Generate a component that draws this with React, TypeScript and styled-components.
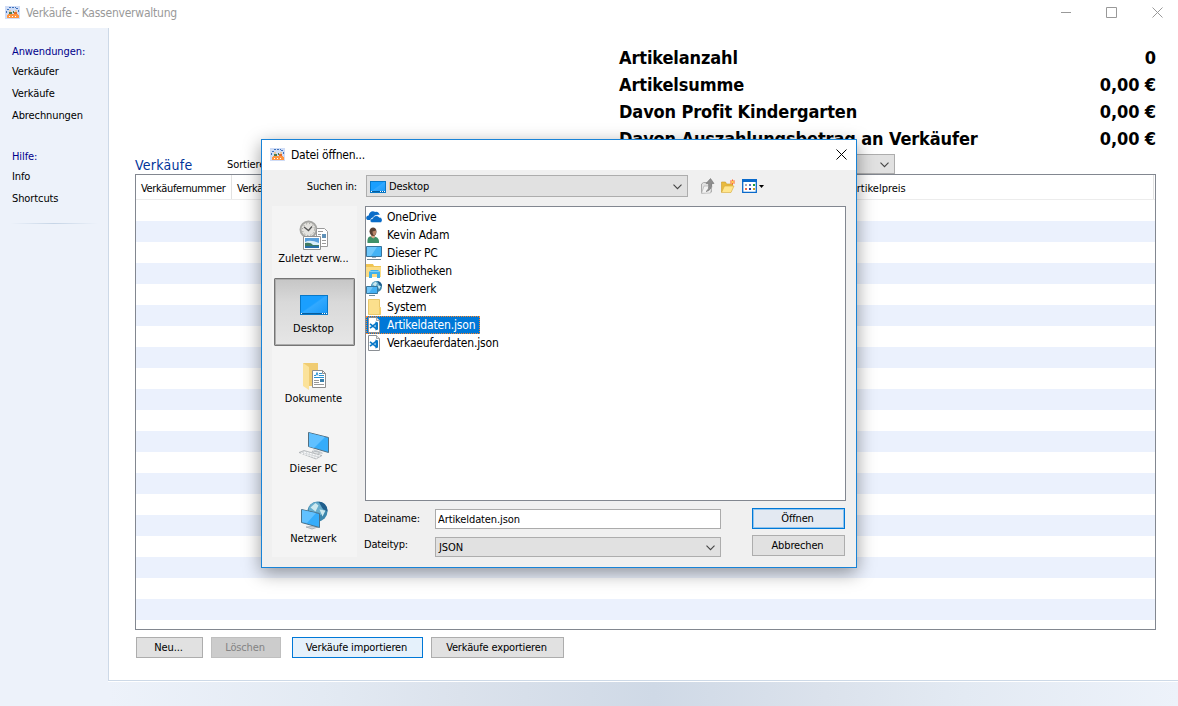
import React, { useId } from "react";
import styled, { createGlobalStyle, css } from "styled-components";

const GlobalStyle = createGlobalStyle`
  * { box-sizing: border-box; }
  body { margin: 0; background: #fff; }
  svg { display: block; flex: none; }
`;

const Window = styled.div`
  position: relative;
  display: flex;
  flex-direction: column;
  width: 1178px;
  height: 706px;
  overflow: hidden;
  background: #fff;
  color: #000;
  font: 11px/14px "DejaVu Sans Condensed", "DejaVu Sans", sans-serif;
  letter-spacing: -0.1px;
  white-space: nowrap;
`;

const TitleBar = styled.header`
  display: flex;
  align-items: center;
  height: 28px;
  padding: 0 15px 3px 5px;
  font-size: 12px;
  letter-spacing: -0.23px;
  color: #999;
`;

const TitleText = styled.span`
  flex: 1;
  margin-left: 6px;
`;

const WindowControls = styled.div`
  display: flex;
  align-items: center;
  gap: 35px;
`;

const Body = styled.div`
  display: flex;
  flex: 1;
`;

const Sidebar = styled.nav`
  width: 108px;
  padding: 17px 0 0 12px;
  background: #edf2fa;
`;

const SidebarTitle = styled.h2`
  margin: 0;
  font: inherit;
  color: #00008b;
  line-height: 14px;
`;

const SidebarList = styled.ul`
  margin: 0 0 25px;
  padding: 0;
  list-style: none;
`;

const SidebarItem = styled.li`
  height: 22px;
  padding-top: 6px;
`;

const SidebarRule = styled.div`
  height: 1px;
  width: 88px;
  margin: -10px 0 0 -2px;
  background: linear-gradient(90deg, transparent, #c6d5e6 50%, transparent);
`;

const Workspace = styled.div`
  display: flex;
  flex-direction: column;
  flex: 1;
`;

const Content = styled.main`
  flex: 1;
  padding: 16px 22px 0 26px;
  border: solid #cdd9e7;
  border-width: 0 0 1px 1px;
`;

const StatusBar = styled.footer`
  height: 25px;
  border-top: 1px solid #fff;
  background: linear-gradient(90deg, #edf2fa, #e3eaf3 20%, #dbe2ec 33%, #cfd9e6 51%, #dbe2ec 67%, #e3eaf3 80%, #edf2fa);
`;

const Totals = styled.dl`
  margin: 0 0 0 484px;
  font-size: 18px;
  font-weight: bold;
  line-height: 27px;
  letter-spacing: -0.12px;
`;

const TotalRow = styled.div`
  display: flex;
  justify-content: space-between;
  dd, dt { margin: 0; }
`;

const TableBar = styled.div`
  display: flex;
  align-items: center;
  height: 22px;
  padding-top: 2px;
`;

const TableTitle = styled.h1`
  width: 92px;
  margin: 2px 0 0;
  font-size: 14px;
  font-weight: normal;
  letter-spacing: 0.25px;
  color: #003399;
`;

const SortLabel = styled.label`
  width: 90px;
  padding-top: 2px;
`;

const ComboBox = styled.div<{ $width: number; $height: number }>`
  display: flex;
  align-items: center;
  width: ${(p) => p.$width}px;
  height: ${(p) => p.$height}px;
  padding: 1px 5px 0 3px;
  border: 1px solid #adadad;
  background: #e1e1e1;
`;

const ComboValue = styled.span`
  flex: 1;
  display: flex;
  align-items: center;
  gap: 3px;
`;

const Table = styled.section`
  height: 456px;
  border: 1px solid #828790;
  overflow: hidden;
`;

const TableHeader = styled.div`
  display: flex;
  height: 25px;
  border-bottom: 1px solid #ececec;
`;

const Column = styled.div<{ $width: number }>`
  width: ${(p) => p.$width}px;
  padding: 7px 0 0 5px;
  border-right: 1px solid #e2e2e2;
  letter-spacing: -0.33px;
  &:last-child { letter-spacing: 0; }
`;

const TableRow = styled.div`
  height: 21px;
  &:nth-child(odd) { background: #ebf1fd; }
`;

const Actions = styled.div`
  display: flex;
  gap: 8px;
  margin: 7px 0 0 1px;
`;

const Button = styled.button<{ $width: number; $tone?: "hot" | "default" | "off"; $push?: number }>`
  width: ${(p) => p.$width}px;
  height: 21px;
  margin: 0 0 0 ${(p) => p.$push ?? 0}px;
  padding: 1px 2px 0 0;
  border: 1px solid #adadad;
  background: #e1e1e1;
  color: #000;
  font: inherit;
  letter-spacing: -0.15px;
  ${(p) => p.$tone === "hot" && css`border-color: #0078d7; background: #e5f1fb;`}
  ${(p) => p.$tone === "default" && css`border-color: #0078d7; background: #e3e9f2; box-shadow: inset 0 0 0 1px #8fc4ee;`}
  ${(p) => p.$tone === "off" && css`border-color: #bfbfbf; background: #ccc; color: #838383;`}
`;

const DialogWindow = styled.div`
  position: absolute;
  left: 261px;
  top: 139px;
  width: 596px;
  height: 429px;
  border: 1px solid #1883d7;
  background: #f0f0f0;
  box-shadow: 0 5px 17px rgba(0, 0, 0, 0.4);
`;

const DialogTitle = styled.div`
  display: flex;
  align-items: center;
  height: 30px;
  padding: 0 9px 1px 8px;
  background: #fff;
  font-size: 12px;
  letter-spacing: -0.2px;
`;

const LookupRow = styled.div`
  display: flex;
  align-items: center;
  height: 22px;
  margin: 5px 0 9px;
`;

const LookupLabel = styled.span`
  width: 104px;
  padding: 2px 9px 0 0;
  text-align: right;
  letter-spacing: -0.2px;
`;

const Toolbar = styled.div`
  display: flex;
  align-items: center;
  gap: 5px;
  margin-left: 12px;
`;

const DialogBody = styled.div`
  display: flex;
  gap: 8px;
  padding-left: 10px;
`;

const Places = styled.div`
  display: flex;
  flex-direction: column;
  align-items: center;
  gap: 2px;
  width: 85px;
  height: 351px;
  padding-top: 2px;
  background: #f4f4f4;
`;

const Place = styled.div<{ $active?: boolean }>`
  display: flex;
  flex-direction: column;
  align-items: center;
  gap: 1px;
  width: 81px;
  height: 68px;
  padding: 10px 2px 0 0;
  border: 1px solid transparent;
  border-radius: 1px;
  letter-spacing: 0;
  ${(p) => p.$active && css`
    border-color: #757575;
    background: linear-gradient(#c6c6c6, #d9d9d9 35%, #e6e6e6);
    box-shadow: inset 0 0 0 1px #acacac;
  `}
`;

const FilePane = styled.div`
  width: 481px;
`;

const FileList = styled.ul`
  height: 295px;
  margin: 0 0 7px;
  padding: 1px 0 0;
  border: 1px solid #828790;
  background: #fff;
  list-style: none;
`;

const FileItem = styled.li<{ $selected?: boolean }>`
  display: flex;
  align-items: center;
  width: max-content;
  height: 18px;
  padding: 0 4px 0 0;
  border: 1px solid transparent;
  font-size: 12px;
  letter-spacing: -0.17px;
  svg { margin: 0 5px 0 -1px; }
  ${(p) => p.$selected && css`
    border: 1px dotted #ff8728;
    background: #0078d7;
    color: #fff;
  `}
`;

const FileForm = styled.div`
  display: flex;
`;

const Fields = styled.div`
  display: grid;
  grid-template-columns: 70px 286px;
  grid-template-rows: 20px 20px;
  row-gap: 8px;
  padding-top: 1px;
`;

const FieldLabel = styled.label`
  margin: 3px 0 0 -1px;
  letter-spacing: -0.2px;
  &:last-of-type { margin-top: 1px; }
`;

const TextField = styled.input`
  width: 286px;
  height: 20px;
  padding: 0 2px;
  border: 1px solid #ababab;
  background: #fff;
  font: inherit;
  letter-spacing: -0.1px;
  outline: none;
`;

const DialogButtons = styled.div`
  display: flex;
  flex-direction: column;
  gap: 6px;
  margin-left: 31px;
`;

const AppIcon = () => (
  <svg width="15" height="13" viewBox="0 0 15 13">
    <path fill="#cfdcf6" d="M0 0h15v13H0z" />
    <path stroke="#3f73bd" strokeDasharray="2 1" fill="none" d="M1.500 7V4.500M2 3.500h2M4 1.500h7M11 2.500h2M13.500 4v3" />
    <path fill="#e9c9a0" d="M4 4h2v2H4zM10 4h2v3h-2z" />
    <path fill="#4e7b50" d="M4 6h3v2H4zM8 5h1v2H8z" />
    <path fill="#e36b2a" d="M9 6h3v2H9z" />
    <path fill="#ff9440" d="M3 8h10v1H3zM2 9h12v3H2z" />
    <path stroke="#fff" strokeDasharray="1 2" d="M4 10.500h9" />
  </svg>
);

const Chevron = () => (
  <svg width="9" height="6" viewBox="0 0 9 6">
    <path d="M.5.7l4 4 4-4" fill="none" stroke="#444" strokeWidth="1.100" />
  </svg>
);

const CloseIcon = ({ color }: { color: string }) => (
  <svg width="11" height="11" viewBox="0 0 11 11">
    <path d="M.5.5l10 10M10.500.5l-10 10" stroke={color} fill="none" />
  </svg>
);

const DesktopIcon = ({ width, height }: { width: number; height: number }) => {
  const id = useId();
  return (
    <svg width={width} height={height} viewBox={`0 0 ${width} ${height}`}>
      <defs>
        <linearGradient id={id} x2="1" y2="1">
          <stop offset=".45" stopColor="#1a9fff" />
          <stop offset=".5" stopColor="#32a9ff" />
          <stop offset="1" stopColor="#1697f8" />
        </linearGradient>
      </defs>
      <rect x=".5" y=".5" width={width - 1} height={height - 1} fill={`url(#${id})`} stroke="#0878c8" />
      <path d={`M1 ${height - 1.500}h${width - 2}`} stroke="#075d9c" />
      <path d={`M1 ${height - 1.500}h1M${width - 6} ${height - 1.500}h1m1 0h1m1 0h1`} stroke="#fff" />
    </svg>
  );
};

const Icon16 = ({ children }: { children: React.ReactNode }) => (
  <svg width="16" height="16" viewBox="0 0 16 16">{children}</svg>
);

const OneDriveIcon = () => (
  <Icon16>
    <path fill="#0a6cc8" d="M1.500 11C-.8 10 .2 6.500 2.700 6.500 3 3 6.500 1 9.200 3c2-.8 4.100.6 4.400 3-3-.6-5.500.4-6.200 2.500-2.200.1-3 1.500-2.600 2.500z" />
    <path fill="#0a6cc8" stroke="#fff" strokeWidth=".5" d="M6 13.600c-2.600-.3-2.300-3.700.6-4C7.600 6.200 11.800 5.700 13.100 8.300c3.200-.2 4.200 4.300 1.400 5.300z" />
  </Icon16>
);

const UserIcon = () => (
  <Icon16>
    <path fill="#3f9168" d="M1.500 16c-.3-4.500.7-6.400 3.500-6.700l2 1.500 2.500-1C12.600 11 13.300 13 13 16z" />
    <path fill="#d4a488" d="M5 7h4v3l-1.500 1.500L5 10z" />
    <path fill="#5a4034" d="M3.500 4.500C3.500-.8 10.500-1 10.500 4.500c0 2-1 4.500-3 4.500s-4-2-4-4.500z" />
    <path fill="#b98469" d="M6.500 4.500l3.500-1v2.300C9.800 7.500 9 8.500 8 8.500S6.500 6 6.500 4.500z" />
  </Icon16>
);

const PcIcon = () => (
  <Icon16>
    <path fill="#43b3f5" stroke="#38749c" d="M.5 1.500h15v10H.5z" />
    <path fill="#70c8fb" d="M1 2h10L5 11H1z" />
    <path stroke="#9ab0bf" d="M6 12.500h4" />
    <path stroke="#6e8797" d="M1 14.500h14" />
  </Icon16>
);

const LibraryIcon = () => (
  <Icon16>
    <path fill="#f0c553" d="M0 1h7l1 2h7v3H0z" />
    <path fill="#fbdc84" d="M0 4h15v10H0z" />
    <path fill="#3fb0eb" d="M3 15V9l2-2h7l2 2v6h-3v-4H6v4z" />
    <path fill="#80d0f6" d="M4 8h9v1H4z" />
  </Icon16>
);

const Globe = ({ cx, cy, r }: { cx: number; cy: number; r: number }) => (
  <g>
    <circle cx={cx} cy={cy} r={r} fill="#3c87ad" />
    <circle cx={cx - r * 0.15} cy={cy - r * 0.2} r={r * 0.72} fill="#69aecd" />
    <path fill="#cde9ef" d={`M${cx - r * 0.7} ${cy - r * 0.4}l${r * 0.5}-${r * 0.45} ${r * 0.3} ${r * 0.25}-${r * 0.3} ${r * 0.6}zM${cx + r * 0.2} ${cy - r * 0.2}l${r * 0.6} ${r * 0.1}-${r * 0.3} ${r * 0.6}z`} />
    <path fill="#205f8d" d={`M${cx + r * 0.1} ${cy - r}q${r * 0.9} ${r * 0.1} ${r * 0.9} ${r}l-${r * 0.5}-${r * 0.3}z`} />
  </g>
);

const NetworkIcon = () => (
  <Icon16>
    <Globe cx={10.5} cy={5.5} r={5.5} />
    <path fill="#45b1f3" stroke="#39779d" d="M.5 5.500h11v7H.5z" />
    <path fill="#70c6fa" d="M1 6h6l-4 6H1z" />
    <path stroke="#718d9d" d="M3 14.500h6" />
  </Icon16>
);

const FolderIcon = () => (
  <Icon16>
    <path fill="#fbe08d" stroke="#e8c76a" d="M2.500.5h11v8h1v7h-12z" />
    <path fill="#f4cf69" d="M13 9h2v6h-2z" />
  </Icon16>
);

const CodeFileIcon = () => (
  <Icon16>
    <path fill="#fff" stroke="#8b8f94" d="M2.500.5h8l3 3v12h-11z" />
    <path fill="#e6e6e6" stroke="#8b8f94" strokeWidth=".8" d="M10.500.5v3h3" />
    <path fill="none" stroke="#0878c8" strokeWidth="1.700" d="M4 6.800l6.500 5M4 11.200l6.500-5" />
    <path fill="#0878c8" d="M9.500 4.500l2.500 1v7l-2.500 1z" />
  </Icon16>
);

const Icon32 = ({ children }: { children: React.ReactNode }) => (
  <svg width="32" height="32" viewBox="0 0 32 32">{children}</svg>
);

const RecentIcon = () => (
  <Icon32>
    <circle cx="10.500" cy="10.500" r="8" fill="#e4e3df" stroke="#a5a5a2" strokeWidth="2" />
    <circle cx="10.500" cy="10.500" r="6" fill="none" stroke="#8a8a86" strokeWidth="1" strokeDasharray="1 2.140" />
    <path d="M6 8l4.500 3.500 3.500-4" fill="none" stroke="#555" strokeWidth="1.300" />
    <path fill="#fff" stroke="#9a9a9a" d="M18.500 9.500h8l3 3v15h-11z" />
    <path stroke="#999" d="M20 12.500h5M20 15.500h3M20 18.500h3M24 21.500h4M24 24.500h4" />
    <path fill="#5f91b8" d="M24 15h4v4h-4z" />
    <path fill="#fff" stroke="#929292" d="M5.500 17.500h17v13h-17z" />
    <path fill="#5aa0dc" d="M7 19h14v10H7z" />
    <path fill="#d9eefa" d="M7 23q5-3 14 1v2H7z" />
    <path fill="#3f7a62" d="M7 24q6-1 8 2h6v1H7z" />
    <path fill="#286fa8" d="M7 27h14v2H7z" />
  </Icon32>
);

const DocumentsIcon = () => (
  <Icon32>
    <path fill="#f0cc72" d="M5 4h15v23h-9z" />
    <path fill="#fbe29a" d="M5 4l6 4v23l-6-4z" />
    <path fill="#fff" stroke="#8d8d8d" d="M14.500 11.500h10l3 3v14h-13z" />
    <path fill="none" stroke="#8d8d8d" d="M24.500 11.500v3h3" />
    <path stroke="#2b91cf" d="M16 16.500h2l1-3 1 3M21 14.500h3M21 16.500h5M16 18.500h10" fill="none" />
    <path stroke="#999" d="M16 21.500h5M16 23.500h5M16 25.500h10" />
    <path fill="#377fac" d="M22 20h4v3h-4z" />
  </Icon32>
);

const LargePcIcon = () => (
  <Icon32>
    <path fill="#c8cdd2" d="M15 20l9 3 1 2-8-1z" />
    <path fill="#35acfa" stroke="#536f81" d="M10.500 3.500l20 5v15l-20-6z" />
    <path fill="#60c0ff" d="M11 4l16 4-11 11-5-1.500z" />
    <path fill="#e1e4e6" stroke="#a6abb0" strokeWidth=".6" d="M14 22l7 1v2l-4 1z" />
    <path fill="#d7dadd" stroke="#9da2a6" strokeWidth=".6" d="M1 23.500l5-2 18 5-6 3.500z" />
    <path stroke="#fff" strokeDasharray="2 1" d="M3 24l16 5M6 23l16 4" />
  </Icon32>
);

const LargeNetworkIcon = () => (
  <Icon32>
    <Globe cx={19.5} cy={12.5} r={10} />
    <path fill="#ccd2d7" stroke="#8f989f" strokeWidth=".6" d="M8 28l8-1 4 1-6 2z" />
    <path fill="#36adfb" stroke="#4b7188" d="M3.500 10.500l18 4v14l-18-5z" />
    <path fill="#61c1ff" d="M4 11l14 3-9 10-5-1z" />
  </Icon32>
);

const UpIcon = () => (
  <Icon16>
    <path fill="#e2e2e2" stroke="#aaa" d="M1.500 15V6l2-1.500h8V14z" />
    <path fill="#f3f3f3" stroke="#b2b2b2" strokeWidth=".7" d="M1.500 15.300L4 8h8l-1.500 7z" />
    <path fill="#8e8e8e" stroke="#737373" strokeWidth=".6" d="M6 13.500q3.500-2 2.500-8H6l4.500-5L14 5.500h-2.200q.2 7-5.800 8z" />
  </Icon16>
);

const NewFolderIcon = () => (
  <Icon16>
    <path fill="#e9bb3e" stroke="#c99a27" strokeWidth=".6" d="M.5 14V4h4l1 2h6v3z" />
    <path fill="#ffe68d" stroke="#d6aa3b" strokeWidth=".6" d="M.5 14.500L3.500 8h9.500l-3 6.500z" />
    <path stroke="#ff5a22" strokeWidth="1" d="M11.500 1.500v5M9 4h5M9.700 2.200l3.600 3.600M13.300 2.200L9.700 5.800" />
    <circle cx="11.500" cy="4" r="1.300" fill="#ffcf55" />
  </Icon16>
);

const ViewIcon = () => (
  <svg width="22" height="16" viewBox="0 0 22 16">
    <path fill="#fff" stroke="#0a6acb" strokeWidth="1.300" d="M.7 1.700h13.600v12.600H.7z" />
    <path fill="#0a6acb" d="M0 1h15v3H0z" />
    <path fill="#a9a9b8" d="M3 6h2v2H3z" /><path fill="#5578c9" d="M7 6h2v2H7z" /><path fill="#199a38" d="M11 6h2v2h-2z" />
    <path fill="#ef6848" d="M3 10h2v2H3z" /><path fill="#22399b" d="M7 10h2v2H7z" /><path fill="#c99b19" d="M11 10h2v2h-2z" />
    <path d="M17 7h5l-2.500 3z" />
  </svg>
);

const totals = [
  ["Artikelanzahl", "0"],
  ["Artikelsumme", "0,00 €"],
  ["Davon Profit Kindergarten", "0,00 €"],
  ["Davon Auszahlungsbetrag an Verkäufer", "0,00 €"],
];

const places = [
  { name: "Zuletzt verw...", icon: <RecentIcon /> },
  { name: "Desktop", icon: <Icon32><svg x="2" y="6"><DesktopIcon width={28} height={20} /></svg></Icon32>, active: true },
  { name: "Dokumente", icon: <DocumentsIcon /> },
  { name: "Dieser PC", icon: <LargePcIcon /> },
  { name: "Netzwerk", icon: <LargeNetworkIcon /> },
];

const files = [
  { name: "OneDrive", icon: <OneDriveIcon /> },
  { name: "Kevin Adam", icon: <UserIcon /> },
  { name: "Dieser PC", icon: <PcIcon /> },
  { name: "Bibliotheken", icon: <LibraryIcon /> },
  { name: "Netzwerk", icon: <NetworkIcon /> },
  { name: "System", icon: <FolderIcon /> },
  { name: "Artikeldaten.json", icon: <CodeFileIcon />, selected: true },
  { name: "Verkaeuferdaten.json", icon: <CodeFileIcon /> },
];

const OpenDialog = () => (
  <DialogWindow role="dialog">
    <DialogTitle>
      <AppIcon />
      <TitleText>Datei öffnen...</TitleText>
      <CloseIcon color="#000" />
    </DialogTitle>
    <LookupRow>
      <LookupLabel>Suchen in:</LookupLabel>
      <ComboBox $width={322} $height={22}>
        <ComboValue><DesktopIcon width={16} height={12} />Desktop</ComboValue>
        <Chevron />
      </ComboBox>
      <Toolbar><UpIcon /><NewFolderIcon /><ViewIcon /></Toolbar>
    </LookupRow>
    <DialogBody>
      <Places>
        {places.map((p) => (
          <Place key={p.name} $active={p.active}>{p.icon}{p.name}</Place>
        ))}
      </Places>
      <FilePane>
        <FileList>
          {files.map((f) => (
            <FileItem key={f.name} $selected={f.selected}>{f.icon}{f.name}</FileItem>
          ))}
        </FileList>
        <FileForm>
          <Fields>
            <FieldLabel>Dateiname:</FieldLabel>
            <TextField defaultValue="Artikeldaten.json" />
            <FieldLabel>Dateityp:</FieldLabel>
            <ComboBox $width={286} $height={20}><ComboValue>JSON</ComboValue><Chevron /></ComboBox>
          </Fields>
          <DialogButtons>
            <Button $width={93} $tone="default">Öffnen</Button>
            <Button $width={93}>Abbrechen</Button>
          </DialogButtons>
        </FileForm>
      </FilePane>
    </DialogBody>
  </DialogWindow>
);

export default function App() {
  return (
    <Window>
      <GlobalStyle />
      <TitleBar>
        <AppIcon />
        <TitleText>Verkäufe - Kassenverwaltung</TitleText>
        <WindowControls>
          <svg width="10" height="11" viewBox="0 0 10 11"><path d="M0 5.500h10" stroke="#999" /></svg>
          <svg width="11" height="11" viewBox="0 0 11 11"><path d="M.5.5h10v10H.5z" fill="none" stroke="#999" /></svg>
          <CloseIcon color="#999" />
        </WindowControls>
      </TitleBar>
      <Body>
        <Sidebar>
          <SidebarTitle>Anwendungen:</SidebarTitle>
          <SidebarList>
            <SidebarItem>Verkäufer</SidebarItem>
            <SidebarItem>Verkäufe</SidebarItem>
            <SidebarItem>Abrechnungen</SidebarItem>
          </SidebarList>
          <SidebarTitle>Hilfe:</SidebarTitle>
          <SidebarList>
            <SidebarItem>Info</SidebarItem>
            <SidebarItem>Shortcuts</SidebarItem>
          </SidebarList>
          <SidebarRule />
        </Sidebar>
        <Workspace>
          <Content>
            <Totals>
              {totals.map(([label, value]) => (
                <TotalRow key={label}><dt>{label}</dt><dd>{value}</dd></TotalRow>
              ))}
            </Totals>
            <TableBar>
              <TableTitle>Verkäufe</TableTitle>
              <SortLabel>Sortieren nach:</SortLabel>
              <ComboBox $width={578} $height={20}><ComboValue /><Chevron /></ComboBox>
            </TableBar>
            <Table>
              <TableHeader>
                <Column $width={96}>Verkäufernummer</Column>
                <Column $width={613}>Verkäufer</Column>
                <Column $width={309}>Artikelpreis</Column>
              </TableHeader>
              {Array.from({ length: 20 }, (_, i) => <TableRow key={i} />)}
            </Table>
            <Actions>
              <Button $width={67}>Neu...</Button>
              <Button $width={70} $tone="off">Löschen</Button>
              <Button $width={131} $tone="hot" $push={3}>Verkäufe importieren</Button>
              <Button $width={133}>Verkäufe exportieren</Button>
            </Actions>
          </Content>
          <StatusBar />
        </Workspace>
      </Body>
      <OpenDialog />
    </Window>
  );
}
